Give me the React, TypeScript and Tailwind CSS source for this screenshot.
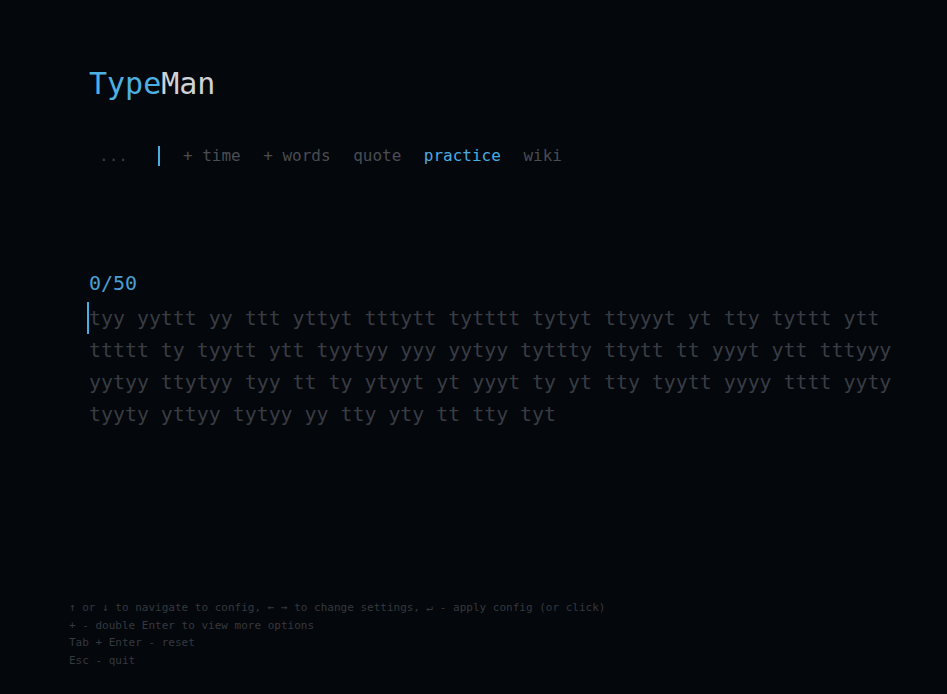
const WORDS =
  "tyy yyttt yy ttt yttyt tttytt tytttt tytyt ttyyyt yt tty tyttt ytt ttttt ty tyytt ytt tyytyy yyy yytyy tyttty ttytt tt yyyt ytt tttyyy yytyy ttytyy tyy tt ty ytyyt yt yyyt ty yt tty tyytt yyyy tttt yyty tyyty yttyy tytyy yy tty yty tt tty tyt";

const MENU = ["+ time", "+ words", "quote", "practice", "wiki"];

const HINTS = [
  "↑ or ↓ to navigate to config, ← → to change settings, ↵ - apply config (or click)",
  "+ - double Enter to view more options",
  "Tab + Enter - reset",
  "Esc - quit",
];

export default function App() {
  return (
    <main className="flex min-h-screen flex-col bg-[#04070c] font-['DejaVu_Sans_Mono',monospace]">
      <div className="px-[89px] pt-[66px]">
        {/* Logo */}
        <h1 className="text-[30px] leading-[36px]">
          <span className="text-[#4eb0e2]">Type</span>
          <span className="text-[#cfd2d6]">Man</span>
        </h1>

        {/* Config menu */}
        <nav className="mt-[42px] flex h-6 items-center text-[16px] leading-6">
          <span className="ml-[10px] text-[#3b3e43]">...</span>
          <span className="ml-[30px] h-[20px] w-[2px] bg-[#4aaee0]" />
          <div className="ml-[23px] flex gap-[22.5px]">
            {MENU.map((item) => (
              <span
                key={item}
                className={item === "practice" ? "text-[#4cace0]" : "text-[#4a4d53]"}
              >
                {item}
              </span>
            ))}
          </div>
        </nav>

        {/* Counter */}
        <p className="mt-[101px] text-[20px] leading-[28px] text-[#4a9fd2]">0/50</p>

        {/* Words */}
        <div className="relative mt-[6px] w-[840px] text-[19.9px] leading-[32px] text-[#393c43]">
          <span className="absolute left-[-2px] top-[-1px] h-[32px] w-[2px] bg-[#4aaee0]" />
          {WORDS}
        </div>
      </div>

      {/* Key hints */}
      <footer className="mt-auto px-[69px] pb-[25px] text-[11px] leading-[17.5px] text-[#36393e]">
        {HINTS.map((line) => (
          <p key={line}>{line}</p>
        ))}
      </footer>
    </main>
  );
}
